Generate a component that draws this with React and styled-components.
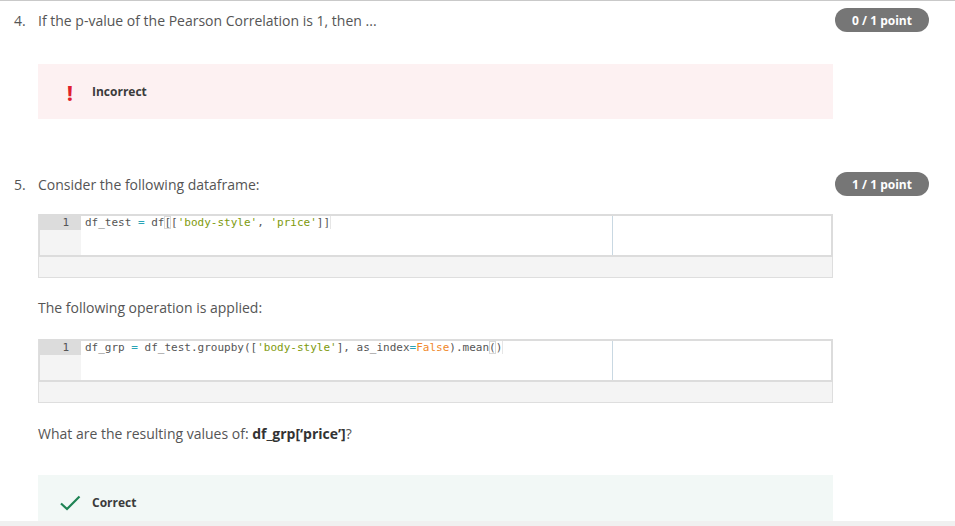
import React from 'react';
import styled, { createGlobalStyle } from 'styled-components';

const GlobalStyle = createGlobalStyle`
  html, body {
    margin: 0;
    padding: 0;
    background: #fff;
    font-family: "Open Sans", "Liberation Sans", sans-serif;
  }
`;

const Page = styled.div`
  width: 955px;
  height: 526px;
  display: flex;
  flex-direction: column;
  overflow: hidden;
`;

const Main = styled.div`
  height: 521px;
  overflow: hidden;
  border-top: 1px solid #c9c9c9;
  box-sizing: border-box;
  padding: 8px 26px 0 14px;
`;

const BottomStrip = styled.div`
  height: 5px;
  background: #f0f0f0;
`;

const Question = styled.section`
  display: grid;
  grid-template-columns: 24px 795px 1fr;
  margin-bottom: ${p => p.$gap || 0}px;
`;

const Num = styled.div`
  font-size: 14px;
  line-height: 23px;
  color: #555;
`;

const Body = styled.div`
  display: flex;
  flex-direction: column;
`;

const Prompt = styled.div`
  font-size: 14px;
  line-height: 23px;
  color: #555;
`;

const Text = styled.div`
  font-size: 14px;
  line-height: 20px;
  color: #555;
  margin-top: ${p => p.$top || 0}px;
  b {
    color: #333;
    font-weight: 700;
  }
`;

const Badge = styled.div`
  justify-self: end;
  align-self: start;
  margin-top: -1px;
  width: 94px;
  height: 24px;
  border-radius: 12px;
  background: #767676;
  color: #fff;
  font-size: 12px;
  font-weight: 700;
  display: flex;
  align-items: center;
  justify-content: center;
`;

const Feedback = styled.div`
  margin-top: ${p => p.$top || 0}px;
  height: 55px;
  background: ${p => (p.$ok ? '#f2f8f6' : '#fdf1f2')};
  display: flex;
  align-items: center;
  padding-left: 18px;
`;

const FeedIcon = styled.div`
  width: 28px;
  margin-right: 8px;
  display: flex;
  justify-content: center;
  align-items: center;
  color: #e0202c;
  font-size: 22px;
  font-weight: 700;
  line-height: 1;
`;

const FeedLabel = styled.div`
  font-size: 12px;
  font-weight: 700;
  color: #3b3b3b;
`;

const CodeBox = styled.div`
  margin-top: ${p => p.$top || 0}px;
  width: 795px;
  box-sizing: border-box;
  border: 1px solid #dedede;
  border-top: none;
  background: #f4f4f4;
`;

const Editor = styled.div`
  position: relative;
  height: 43px;
  box-sizing: border-box;
  border: 2px solid #dcdcdc;
  border-left-width: 1px;
  margin-right: -1px;
  background: #fff;
  display: flex;
`;

const Gutter = styled.div`
  width: 41px;
  background: #f4f4f4;
`;

const LineNo = styled.div`
  height: 14px;
  background: #dcdcdc;
  text-align: right;
  padding-right: 12px;
  font-family: "DejaVu Sans Mono", "Liberation Mono", monospace;
  font-size: 11px;
  line-height: 14px;
  color: #555;
`;

const CodeLine = styled.pre`
  margin: 0;
  padding-left: 4px;
  font-family: "DejaVu Sans Mono", "Liberation Mono", monospace;
  font-size: 11px;
  line-height: 14px;
  color: #555;
  height: 14px;
`;

const Op = styled.span`
  color: #2aa4b6;
`;
const Str = styled.span`
  color: #7e9a0c;
`;
const Const = styled.span`
  color: #f0882a;
`;
const Match = styled.span`
  outline: 1px solid #d9d9d9;
  outline-offset: -1px;
`;
const LineEnd = styled.span`
  border-right: 1px solid #e6e6e6;
`;

const PrintMargin = styled.div`
  position: absolute;
  top: 0;
  bottom: 0;
  left: 572px;
  width: 1px;
  background: #c9d8e2;
`;

const CodeFooter = styled.div`
  height: 20px;
`;

function Code({ children, top }) {
  return (
    <CodeBox $top={top}>
      <Editor>
        <Gutter>
          <LineNo>1</LineNo>
        </Gutter>
        <CodeLine>{children}</CodeLine>
        <PrintMargin />
      </Editor>
      <CodeFooter />
    </CodeBox>
  );
}

function Check() {
  return (
    <svg width="22" height="16" viewBox="0 0 22 16" fill="none">
      <path d="M2 8.5 L8 14 L20.5 1.5" stroke="#1f8354" strokeWidth="2.2" />
    </svg>
  );
}

export default function App() {
  return (
    <Page>
      <GlobalStyle />
      <Main>
        <Question $gap={54}>
          <Num>4.</Num>
          <Body>
            <Prompt>If the p-value of the Pearson Correlation is 1, then ...</Prompt>
            <Feedback $top={32}>
              <FeedIcon>!</FeedIcon>
              <FeedLabel>Incorrect</FeedLabel>
            </Feedback>
          </Body>
          <Badge>0 / 1 point</Badge>
        </Question>

        <Question>
          <Num>5.</Num>
          <Body>
            <Prompt>Consider the following dataframe:</Prompt>
            <Code top={18}>
              <LineEnd>
                df_test <Op>=</Op> df<Match>[</Match>[<Str>'body-style'</Str>, <Str>'price'</Str>]]
              </LineEnd>
            </Code>
            <Text $top={20}>The following operation is applied:</Text>
            <Code top={21}>
              <LineEnd>
                df_grp <Op>=</Op> df_test.groupby([<Str>'body-style'</Str>], as_index<Op>=</Op>
                <Const>False</Const>).mean<Match>(</Match>)
              </LineEnd>
            </Code>
            <Text $top={21}>
              What are the resulting values of: <b>df_grp[‘price’]</b>?
            </Text>
            <Feedback $ok $top={31}>
              <FeedIcon>
                <Check />
              </FeedIcon>
              <FeedLabel>Correct</FeedLabel>
            </Feedback>
          </Body>
          <Badge>1 / 1 point</Badge>
        </Question>
      </Main>
      <BottomStrip />
    </Page>
  );
}
